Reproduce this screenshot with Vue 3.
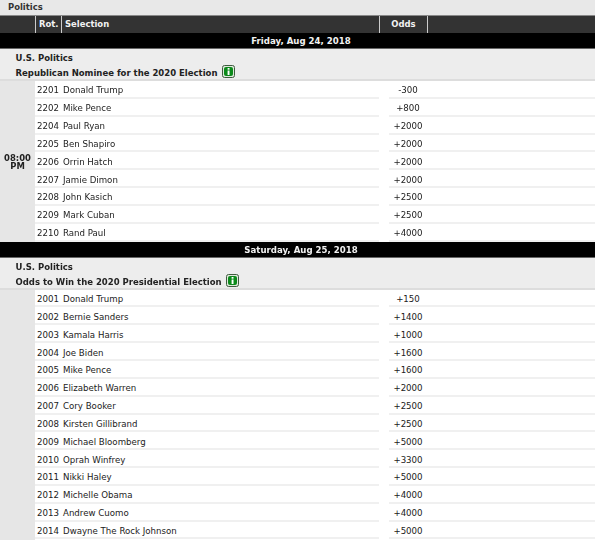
<script setup>
const sections = [
  {
    date: 'Friday, Aug 24, 2018',
    league: 'U.S. Politics',
    title: 'Republican Nominee for the 2020 Election',
    time: ['08:00', 'PM'],
    rows: [
      ['2201', 'Donald Trump', '-300'],
      ['2202', 'Mike Pence', '+800'],
      ['2204', 'Paul Ryan', '+2000'],
      ['2205', 'Ben Shapiro', '+2000'],
      ['2206', 'Orrin Hatch', '+2000'],
      ['2207', 'Jamie Dimon', '+2000'],
      ['2208', 'John Kasich', '+2500'],
      ['2209', 'Mark Cuban', '+2500'],
      ['2210', 'Rand Paul', '+4000'],
    ],
  },
  {
    date: 'Saturday, Aug 25, 2018',
    league: 'U.S. Politics',
    title: 'Odds to Win the 2020 Presidential Election',
    time: [],
    rows: [
      ['2001', 'Donald Trump', '+150'],
      ['2002', 'Bernie Sanders', '+1400'],
      ['2003', 'Kamala Harris', '+1000'],
      ['2004', 'Joe Biden', '+1600'],
      ['2005', 'Mike Pence', '+1600'],
      ['2006', 'Elizabeth Warren', '+2000'],
      ['2007', 'Cory Booker', '+2500'],
      ['2008', 'Kirsten Gillibrand', '+2500'],
      ['2009', 'Michael Bloomberg', '+5000'],
      ['2010', 'Oprah Winfrey', '+3300'],
      ['2011', 'Nikki Haley', '+5000'],
      ['2012', 'Michelle Obama', '+4000'],
      ['2013', 'Andrew Cuomo', '+4000'],
      ['2014', 'Dwayne The Rock Johnson', '+5000'],
    ],
  },
]
</script>

<template>
  <div class="page">
    <div class="crumb">Politics</div>
    <div class="head">
      <div class="h-time"></div>
      <div class="h-rot">Rot.</div>
      <div class="h-sel">Selection</div>
      <div class="h-odds">Odds</div>
      <div class="h-rest"></div>
    </div>
    <section v-for="s in sections" :key="s.date">
      <div class="date">{{ s.date }}</div>
      <div class="group">
        <div class="league">{{ s.league }}</div>
        <div class="title">
          <span>{{ s.title }}</span>
          <svg class="info" width="13" height="13" viewBox="0 0 13 13">
            <rect x="0.5" y="0.5" width="12" height="12" rx="2" fill="#dfe8dc" stroke="#3f5c3f" />
            <rect x="2" y="2" width="9" height="9" rx="2" fill="#0b8a1a" />
            <rect x="5.6" y="3" width="1.9" height="1.7" fill="#fff" />
            <rect x="5.6" y="5.5" width="1.9" height="4.5" fill="#fff" />
          </svg>
        </div>
      </div>
      <div class="body">
        <div class="time">
          <span v-for="t in s.time" :key="t">{{ t }}</span>
        </div>
        <div class="rows">
          <div v-for="r in s.rows" :key="r[0]" class="row">
            <div class="left">
              <span class="rot">{{ r[0] }}</span>
              <span class="name">{{ r[1] }}</span>
            </div>
            <div class="gap"></div>
            <div class="right">
              <span class="odds">{{ r[2] }}</span>
            </div>
          </div>
        </div>
      </div>
    </section>
  </div>
</template>

<style>
html, body { margin: 0; background: #fff; }
</style>

<style scoped>
.page {
  width: 595px;
  height: 540px;
  overflow: hidden;
  font-family: "DejaVu Sans", Verdana, sans-serif;
  font-size: 8.65px;
  color: #222;
  filter: blur(0.3px);
}
.crumb {
  height: 15px;
  line-height: 14px;
  padding-left: 8px;
  background: #e8e8e8;
  font-weight: 700;
  font-size: 8.45px;
  color: #333;
}
.head {
  display: flex;
  height: 18px;
  line-height: 17px;
  background: #333;
  color: #f2f2f2;
  font-weight: 700;
  font-size: 8.45px;
  border-top: 1px solid #888;
  box-sizing: border-box;
}
.head > div { box-sizing: border-box; border-right: 1px solid #ccc; }
.h-time { width: 36px; }
.h-rot { width: 26px; padding-left: 3px; }
.h-sel { width: 318px; padding-left: 3px; }
.h-odds { width: 48px; text-align: center; }
.head > .h-rest { flex: 1; border-right: 0; }
.date {
  height: 16px;
  line-height: 16px;
  box-sizing: border-box;
  padding-left: 7px;
  background: #000;
  color: #f2f2f2;
  font-weight: 700;
  font-size: 8.6px;
  text-align: center;
  border-bottom: 1px solid #666;
}
.group {
  height: 32px;
  box-sizing: border-box;
  padding-left: 15.5px;
  background: #ededed;
  border-bottom: 2px solid #ddd;
  font-weight: 700;
  font-size: 8.5px;
  color: #222;
}
.league { height: 16px; line-height: 18px; }
.title { display: flex; align-items: center; gap: 4.5px; height: 14px; padding-top: 1px; }
.info { flex: none; margin-top: -3px; }
.body { display: flex; }
section:last-child .body { min-height: 260px; }
.time {
  width: 35px;
  flex: none;
  background: #e6e6e6;
  display: flex;
  flex-direction: column;
  justify-content: center;
  align-items: center;
  font-weight: 700;
  font-size: 8.45px;
  line-height: 8.5px;
  color: #222;
  box-sizing: border-box;
  padding-top: 2px;
}
.rows { flex: 1; }
.row {
  display: flex;
  height: 17.85px;
  background: #fff;
}
.left, .right {
  box-sizing: border-box;
  border-bottom: 2px solid #f0f0f0;
  display: flex;
  align-items: center;
  padding-top: 3px;
}
.left { width: 344px; padding-left: 2px; }
.gap { width: 10px; }
.right { flex: 1; }
.rot { width: 26px; }
.odds { width: 38px; text-align: center; }
</style>
